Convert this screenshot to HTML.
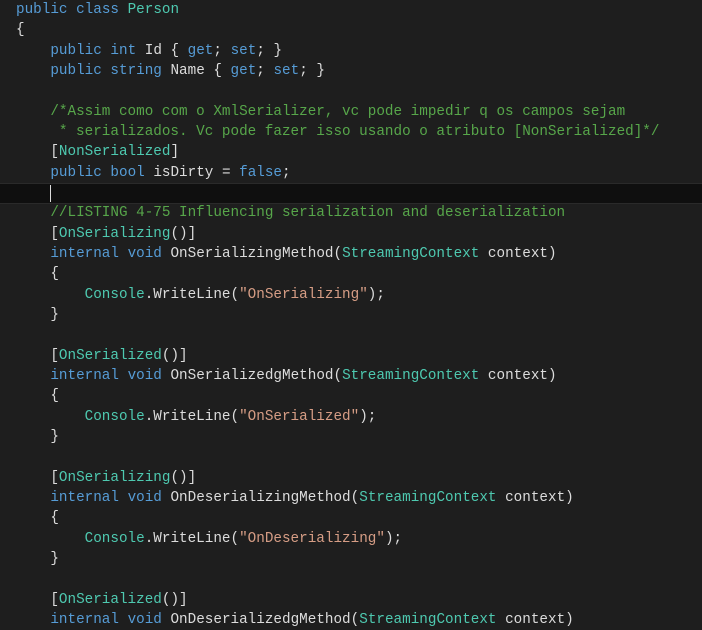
<!DOCTYPE html>
<html><head><style>
html,body{margin:0;padding:0;background:#1e1e1e;width:702px;height:624px;overflow:hidden}
pre{margin:0;position:absolute;left:16px;top:0;font-family:"Liberation Mono",monospace;font-size:14.3px;line-height:20.33px;color:#dcdcdc;white-space:pre}
.k{color:#569cd6}.t{color:#4ec9b0}.c{color:#57a64a}.s{color:#d69d85}
.cur{position:absolute;left:0;top:183px;width:702px;height:19px;background:#0f0f0f;border-top:1px solid #2a2a2a;border-bottom:1px solid #2a2a2a}
.caret{position:absolute;left:50px;top:185px;width:1px;height:17px;background:#dcdcdc}
</style></head><body>
<div class="cur"></div><div class="caret"></div>
<pre><span class="k">public</span> <span class="k">class</span> <span class="t">Person</span>
{
    <span class="k">public</span> <span class="k">int</span> Id { <span class="k">get</span>; <span class="k">set</span>; }
    <span class="k">public</span> <span class="k">string</span> Name { <span class="k">get</span>; <span class="k">set</span>; }

    <span class="c">/*Assim como com o XmlSerializer, vc pode impedir q os campos sejam</span>
<span class="c">     * serializados. Vc pode fazer isso usando o atributo [NonSerialized]*/</span>
    [<span class="t">NonSerialized</span>]
    <span class="k">public</span> <span class="k">bool</span> isDirty = <span class="k">false</span>;

    <span class="c">//LISTING 4-75 Influencing serialization and deserialization</span>
    [<span class="t">OnSerializing</span>()]
    <span class="k">internal</span> <span class="k">void</span> OnSerializingMethod(<span class="t">StreamingContext</span> context)
    {
        <span class="t">Console</span>.WriteLine(<span class="s">"OnSerializing"</span>);
    }

    [<span class="t">OnSerialized</span>()]
    <span class="k">internal</span> <span class="k">void</span> OnSerializedgMethod(<span class="t">StreamingContext</span> context)
    {
        <span class="t">Console</span>.WriteLine(<span class="s">"OnSerialized"</span>);
    }

    [<span class="t">OnSerializing</span>()]
    <span class="k">internal</span> <span class="k">void</span> OnDeserializingMethod(<span class="t">StreamingContext</span> context)
    {
        <span class="t">Console</span>.WriteLine(<span class="s">"OnDeserializing"</span>);
    }

    [<span class="t">OnSerialized</span>()]
    <span class="k">internal</span> <span class="k">void</span> OnDeserializedgMethod(<span class="t">StreamingContext</span> context)
</pre>
</body></html>
